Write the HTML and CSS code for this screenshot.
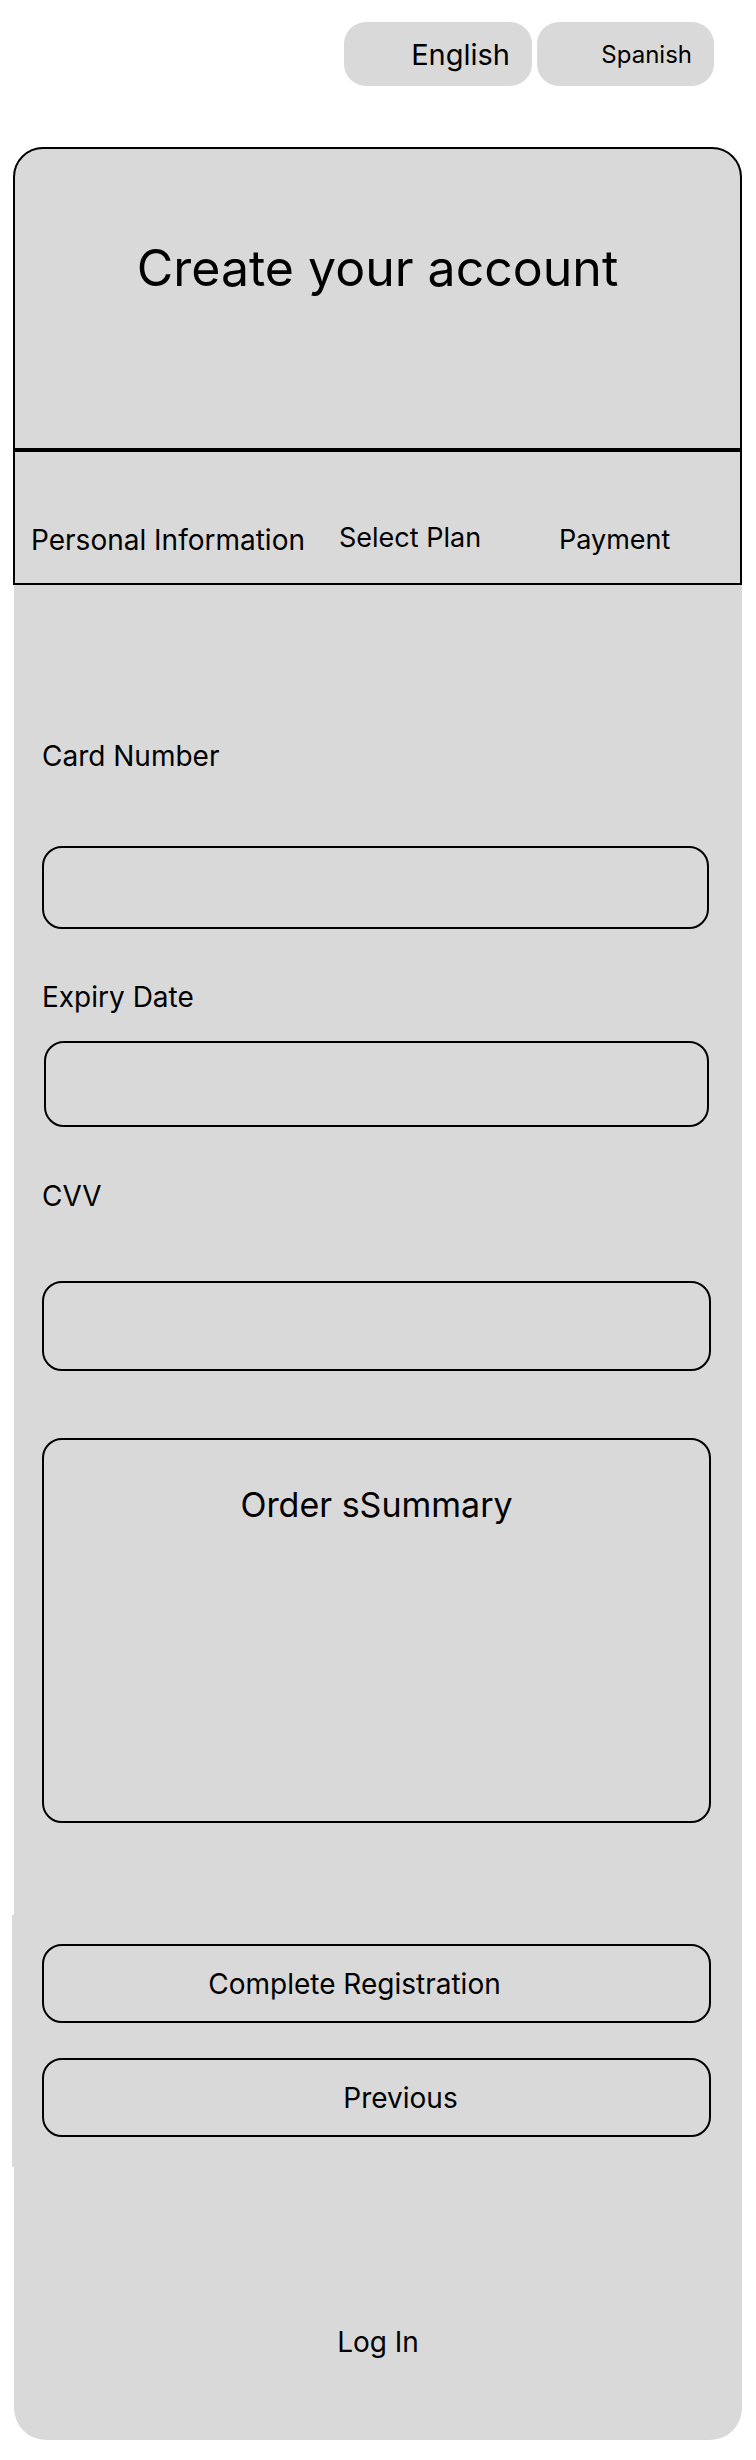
FILE: index.html
```html
<!DOCTYPE html>
<html lang="en">
<head>
    <meta charset="UTF-8">
    <meta name="viewport" content="width=device-width, initial-scale=1.0">
    <title>Create your account - Payment</title>
    <link rel="stylesheet" href="styles.css">
</head>
<body>
    <div class="lang-bar">
        <button class="lang-btn lang-en">English</button>
        <button class="lang-btn lang-es">Spanish</button>
    </div>

    <div class="card">
        <div class="card-header">
            <h1>Create your account</h1>
        </div>

        <div class="tabs">
            <span class="tab tab-personal">Personal Information</span>
            <span class="tab tab-plan">Select Plan</span>
            <span class="tab tab-payment">Payment</span>
        </div>

        <form class="payment-form">
            <div class="field field-card">
                <label for="cardNumber">Card Number</label>
                <input type="text" id="cardNumber" class="input-card">
            </div>

            <div class="field field-expiry">
                <label for="expiry">Expiry Date</label>
                <input type="text" id="expiry" class="input-expiry">
            </div>

            <div class="field field-cvv">
                <label for="cvv">CVV</label>
                <input type="text" id="cvv" class="input-cvv">
            </div>

            <div class="summary">
                <h3>Order sSummary</h3>
            </div>

            <div class="actions">
                <button type="submit" class="btn btn-complete">Complete Registration</button>
                <button type="button" class="btn btn-prev">Previous</button>
            </div>
        </form>

        <p class="login">Log In</p>
    </div>
</body>
</html>
```

FILE: styles.css
```css
* {
    box-sizing: border-box;
}
body {
    font-family: Inter, "Noto Sans", Arial, sans-serif;
    background: #fff;
    color: #000;
    margin: 0;
    padding: 0;
}
.lang-bar {
    display: flex;
    justify-content: flex-end;
    gap: 5px;
    padding: 22px 42px 0 0;
}
.lang-btn {
    height: 64px;
    border: none;
    border-radius: 22px;
    background-color: #d9d9d9;
    color: #000;
    font-family: inherit;
    text-align: right;
    padding: 0 22px 0 0;
}
.lang-en {
    width: 188px;
    font-size: 29px;
}
.lang-es {
    width: 177px;
    font-size: 24px;
}
.card {
    width: 728px;
    margin: 61px auto 20px;
    background-color: #d9d9d9;
    border-radius: 32px;
}
.card-header {
    height: 303px;
    border: 2px solid #000;
    border-radius: 30px 30px 0 0;
    padding-top: 89px;
    margin-left: -1px;
}
.card-header h1 {
    margin: 0;
    text-align: center;
    font-size: 50px;
    line-height: 60px;
    font-weight: 400;
}
.tabs {
    display: flex;
    height: 135px;
    border: 2px solid #000;
    padding: 71px 0 0 16px;
    margin-left: -1px;
    font-size: 28px;
    line-height: 34px;
}
.tab-personal {
    width: 308px;
}
.tab-plan {
    width: 220px;
    margin-top: -2px;
    font-size: 27px;
}
.tab-payment {
    font-size: 27px;
}
.payment-form {
    padding: 154px 31px 0 28px;
}
.field label {
    display: block;
    font-size: 28px;
    line-height: 34px;
}
.field input {
    display: block;
    width: 100%;
    background: transparent;
    border: 2px solid #000;
    border-radius: 20px;
    font-family: inherit;
    font-size: 24px;
    padding: 0 20px;
}
.field-card label {
    margin-bottom: 73px;
}
.input-card {
    height: 83px;
    width: 667px !important;
}
.field-expiry {
    margin-top: 51px;
}
.field-expiry label {
    margin-bottom: 27px;
}
.input-expiry {
    height: 86px;
    width: 665px !important;
    margin-left: 2px;
}
.field-cvv {
    margin-top: 52px;
}
.field-cvv label {
    margin-bottom: 68px;
}
.input-cvv {
    height: 90px;
}
.summary {
    margin-top: 67px;
    height: 385px;
    border: 2px solid #000;
    border-radius: 20px;
    padding-top: 44px;
}
.summary h3 {
    margin: 0;
    text-align: center;
    font-size: 34px;
    line-height: 41px;
    font-weight: 400;
}
.actions {
    display: flex;
    flex-direction: column;
    gap: 35px;
    margin: 92px -31px 0 -30px;
    padding: 29px 31px 30px 30px;
    background-color: #d9d9d9;
}
.btn {
    height: 79px;
    width: 100%;
    background: transparent;
    border: 2px solid #000;
    border-radius: 20px;
    font-family: inherit;
    font-size: 28px;
    color: #000;
}
.btn-complete {
    padding-right: 50px;
}
.btn-prev {
    padding-left: 54px;
}
.login {
    margin: 158px 0 0;
    padding-bottom: 81px;
    text-align: center;
    font-size: 28px;
    line-height: 34px;
}
```
